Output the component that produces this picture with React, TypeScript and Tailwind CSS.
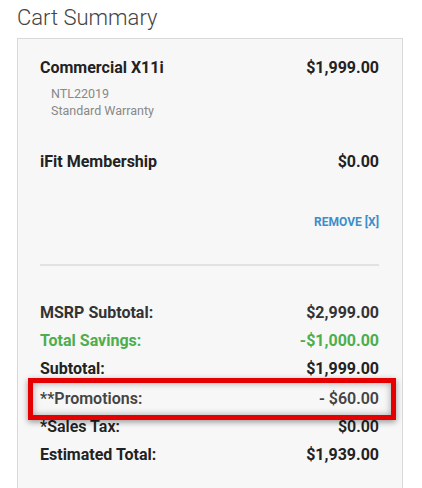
import React from "react";

const Row: React.FC<{ label: string; value: string; className?: string }> = ({
  label,
  value,
  className = "",
}) => (
  <div className={`flex justify-between items-center h-[28px] text-[16px] ${className}`}>
    <span>{label}</span>
    <span>{value}</span>
  </div>
);

const App: React.FC = () => {
  return (
    <div
      className="w-[422px] h-[488px] bg-white overflow-hidden"
      style={{ fontFamily: "Roboto, 'Liberation Sans', sans-serif" }}
    >
      <h2 className="pl-[17px] pt-[3px] text-[22px] leading-[29px] font-light text-[#444]">
        Cart Summary
      </h2>

      <div className="ml-[17px] mt-[6px] w-[386px] h-[460px] bg-[#f7f7f7] border border-[#d9d9d9] pl-[22px] pr-[23px] pt-[18px]">
        {/* product */}
        <div className="flex justify-between text-[16px] font-bold leading-[22px] text-[#222]">
          <span>Commercial X11i</span>
          <span>$1,999.00</span>
        </div>
        <div className="pl-[11px] mt-[6px] text-[12.5px] leading-[17px] text-[#888]">
          <div>NTL22019</div>
          <div>Standard Warranty</div>
        </div>

        {/* membership */}
        <div className="flex justify-between mt-[32px] text-[16px] font-bold leading-[22px] text-[#222]">
          <span>iFit Membership</span>
          <span>$0.00</span>
        </div>
        <div className="flex justify-end mt-[42px] text-[12px] font-bold leading-[14px] text-[#3d8ec9]">
          REMOVE [X]
        </div>

        <div className="mt-[35px] h-[2px] bg-[#e2e2e2]" />

        {/* totals */}
        <div className="mt-[33px] font-bold">
          <Row label="MSRP Subtotal:" value="$2,999.00" className="text-[#333]" />
          <Row label="Total Savings:" value="-$1,000.00" className="text-[#4cae4c]" />
          <Row label="Subtotal:" value="$1,999.00" className="text-[#222]" />
          <div className="relative mt-[2px]">
            {/* highlight box drawn over neighbouring rows */}
            <div className="absolute -top-[7px] -bottom-[7px] -left-[12px] -right-[17px] border-[5px] border-[#e40000] bg-[#f7f7f7] shadow-[0_2px_6px_rgba(0,0,0,0.4),inset_0_0_7px_rgba(0,0,0,0.35)]" />
            <div className="relative flex justify-between items-center h-[28px] text-[16px] font-semibold text-[#444]">
              <span>**Promotions:</span>
              <span>- $60.00</span>
            </div>
          </div>
          <Row label="*Sales Tax:" value="$0.00" className="text-[#222] font-semibold" />
          <Row label="Estimated Total:" value="$1,939.00" className="text-[#222]" />
        </div>
      </div>
    </div>
  );
};

export default App;
